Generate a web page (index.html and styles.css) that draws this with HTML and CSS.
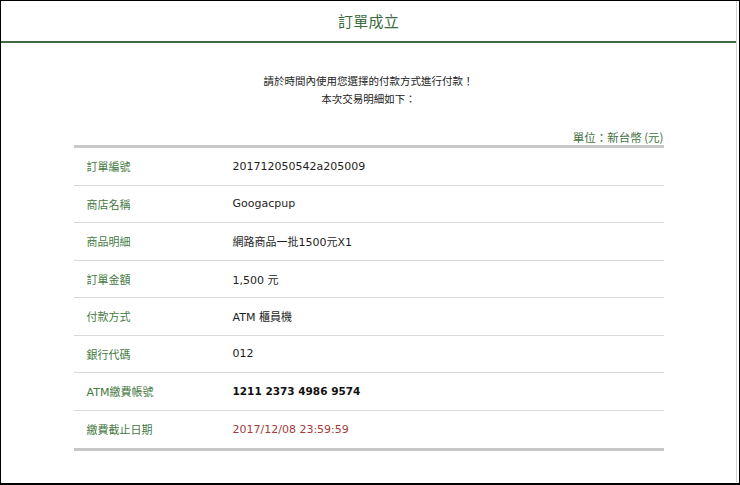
FILE: index.html
```html
<!DOCTYPE html>
<html lang="zh-Hant">
<head>
<meta charset="utf-8">
<title>訂單成立</title>
<link rel="stylesheet" href="styles.css">
</head>
<body>
<div class="frame">
  <div class="page">
    <header class="header"><h1 class="title">訂單成立</h1></header>
    <div class="intro">
      <p>請於時間內使用您選擇的付款方式進行付款！</p>
      <p>本次交易明細如下：</p>
    </div>
    <div class="details">
      <div class="unit">單位：新台幣 (元)</div>
      <div class="table">
        <div class="row"><div class="label">訂單編號</div><div class="value">201712050542a205009</div></div>
        <div class="row"><div class="label">商店名稱</div><div class="value">Googacpup</div></div>
        <div class="row"><div class="label">商品明細</div><div class="value">網路商品一批1500元X1</div></div>
        <div class="row"><div class="label">訂單金額</div><div class="value">1,500 元</div></div>
        <div class="row"><div class="label">付款方式</div><div class="value">ATM 櫃員機</div></div>
        <div class="row"><div class="label">銀行代碼</div><div class="value">012</div></div>
        <div class="row"><div class="label">ATM繳費帳號</div><div class="value strong">1211 2373 4986 9574</div></div>
        <div class="row"><div class="label">繳費截止日期</div><div class="value due">2017/12/08 23:59:59</div></div>
      </div>
    </div>
  </div>
</div>
</body>
</html>
```

FILE: styles.css
```css
* { box-sizing: border-box; }
html, body { margin: 0; padding: 0; background: #fff; }
body {
  font-family: "DejaVu Sans", "Noto Sans CJK TC", sans-serif;
  color: #222;
}
.frame {
  width: 740px;
  height: 485px;
  border-left: 1px solid #000;
  border-top: 1px solid #000;
  border-bottom: 2px solid #000;
  border-right: 1px solid #000;
  overflow: hidden;
}
.page {
  width: 736px;
  height: 100%;
  border-right: 1px solid #d4d4d4;
}
.header {
  height: 42px;
  border-bottom: 2px solid #3f6b44;
  display: flex;
  align-items: center;
  justify-content: center;
  padding-bottom: 2px;
}
.title {
  margin: 0;
  font-family: "Noto Sans CJK TC", sans-serif;
  font-weight: 400;
  font-size: 15px;
  color: #3c6a40;
  letter-spacing: 0.3px;
}
.intro {
  padding-top: 29px;
  text-align: center;
  font-family: "Noto Sans CJK TC", sans-serif;
  font-size: 10.5px;
  line-height: 18px;
  color: #222;
}
.intro p { margin: 0; }
.details {
  width: 590px;
  margin: 21px auto 0;
}
.unit {
  text-align: right;
  font-family: "Noto Sans CJK TC", sans-serif;
  font-size: 11.5px;
  line-height: 16px;
  color: #3f7141;
}
.table {
  border-top: 3px solid #c9c9c9;
  border-bottom: 3px solid #c6c6c6;
}
.row {
  display: flex;
  align-items: center;
  height: 37.5px;
  border-bottom: 1px solid #d9d9d9;
  font-size: 11px;
}
.row:last-child { border-bottom: none; height: 37px; }
.label {
  width: 159px;
  padding-left: 13px;
  color: #467a43;
  font-family: "DejaVu Sans", "Noto Sans CJK TC", sans-serif;
}
.value {
  color: #1e1e1e;
}
.value.strong {
  font-weight: 700;
  font-size: 10.5px;
  color: #111;
}
.value.due {
  color: #a33a3c;
}
```
